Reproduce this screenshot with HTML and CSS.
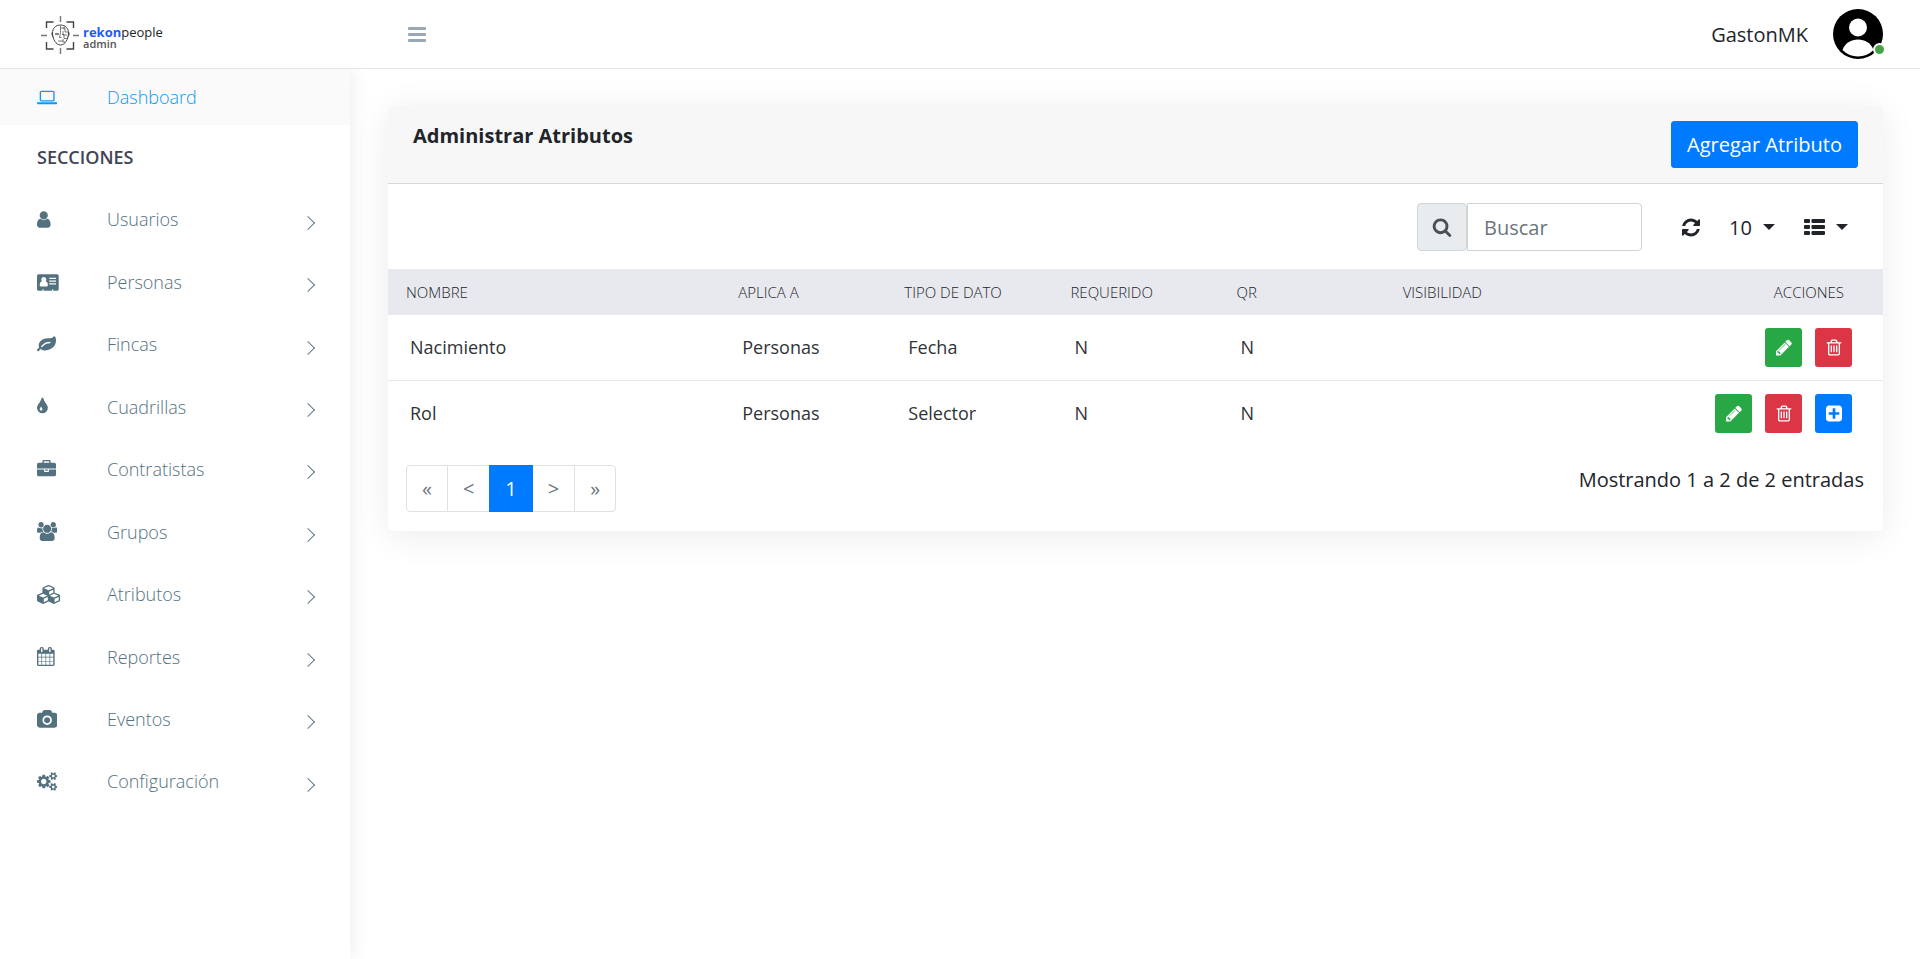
FILE: index.html
```html
<!DOCTYPE html>
<html lang="es">
<head>
<meta charset="utf-8">
<title>Administrar Atributos</title>
<link rel="stylesheet" href="styles.css">
</head>
<body>
<svg class="sprite" aria-hidden="true">
  <symbol id="i-pencil" viewBox="128 0 1536 1792"><path d="M491 1536l91-91-235-235-91 91v107h128v128h107zm523-928q0-22-22-22-10 0-17 7l-542 542q-7 7-7 17 0 22 22 22 10 0 17-7l542-542q7-7 7-17zm-54-192l416 416-832 832h-416v-416zm683 96q0 53-37 90l-166 166-416-416 166-165q36-38 90-38 53 0 91 38l235 234q37 39 37 91z"/></symbol>
  <symbol id="i-trash" viewBox="128 0 1536 1792"><path d="M704 736v576q0 14-9 23t-23 9h-64q-14 0-23-9t-9-23v-576q0-14 9-23t23-9h64q14 0 23 9t9 23zm256 0v576q0 14-9 23t-23 9h-64q-14 0-23-9t-9-23v-576q0-14 9-23t23-9h64q14 0 23 9t9 23zm256 0v576q0 14-9 23t-23 9h-64q-14 0-23-9t-9-23v-576q0-14 9-23t23-9h64q14 0 23 9t9 23zm128 724v-948h-896v948q0 22 7 40.5t14.5 27 10.5 8.5h832q3 0 10.5-8.5t14.5-27 7-40.5zm-672-1076h448l-48-117q-7-9-17-11h-317q-10 2-17 11zm928 32v64q0 14-9 23t-23 9h-96v948q0 83-47 143.5t-113 60.5h-832q-66 0-113-58.5t-47-141.5v-952h-96q-14 0-23-9t-9-23v-64q0-14 9-23t23-9h309l70-167q15-37 54-63t79-26h320q40 0 79 26t54 63l70 167h309q14 0 23 9t9 23z"/></symbol>
  <symbol id="i-plus" viewBox="128 0 1536 1792"><path d="M1408 960v-128q0-26-19-45t-45-19h-320v-320q0-26-19-45t-45-19h-128q-26 0-45 19t-19 45v320h-320q-26 0-45 19t-19 45v128q0 26 19 45t45 19h320v320q0 26 19 45t45 19h128q26 0 45-19t19-45v-320h320q26 0 45-19t19-45zm256-544v960q0 119-84.5 203.5t-203.5 84.5h-960q-119 0-203.5-84.5t-84.5-203.5v-960q0-119 84.5-203.5t203.5-84.5h960q119 0 203.5 84.5t84.5 203.5z"/></symbol>
  <symbol id="i-caret" viewBox="0 0 12 6"><path d="M0 0h12L6 6z"/></symbol>
</svg>

<header class="topbar">
  <a class="brand" href="#" aria-label="rekonpeople admin">
    <svg class="brand-mark" viewBox="0 0 38 38" fill="none" stroke="#444">
      <path stroke-width="1.4" d="M5.5 12V6h7M25.500 6h7v6M32.500 26v7h-7M12.500 33h-7v-7"/>
      <path stroke="#777" stroke-width="1.400" d="M19.500 0v6M19.500 32v6M0 19.500h6M32 19.500h6"/>
      <path stroke-width="1" d="M19.500 9c-5 0-8 3.500-8 8 0 6 3.500 12 8 12s8-6 8-12c0-4.500-3-8-8-8zM11.500 16c-1.500 1 0 5 1 5M27.500 16c1.500 1 0 5-1 5"/>
      <path stroke-width=".7" d="M14 18q2-1.500 4 0-2 1.500-4 0M19.500 9.500v7l-1 5h2M17 25h5M20 12h4v4h3M22 15v4h4M21 18.500h2v4h3M22 23v3h2M23 10.500v3"/>
    </svg>
    <span class="brand-text"><span><b>rekon</b>people</span><span class="brand-sub">admin</span></span>
  </a>
  <button class="menu-toggle" type="button" aria-label="Menú">
    <svg viewBox="0 0 18 15"><path d="M1 0h16q1 0 1 1v1q0 1-1 1H1Q0 3 0 2V1q0-1 1-1zM1 6h16q1 0 1 1v1q0 1-1 1H1Q0 9 0 8V7q0-1 1-1zM1 12h16q1 0 1 1v1q0 1-1 1H1q-1 0-1-1v-1q0-1 1-1z"/></svg>
  </button>
  <a class="user" href="#">
    <span>GastonMK</span>
    <span class="avatar">
      <svg viewBox="0 0 50 50"><circle cx="25" cy="25" r="25"/><circle cx="25" cy="18.500" r="9" fill="#fff"/><path fill="#fff" d="M9.500 41C12 34 18 30.500 25 30.500S38 34 40.500 41Q34 47.500 25 47.500T9.500 41z"/></svg>
      <i class="status"></i>
    </span>
  </a>
</header>

<div class="layout">
  <nav class="sidebar">
    <a class="nav-link active" href="#">
      <span class="nav-icon"><svg viewBox="0 0 1920 1792"><path d="M416 1280q-66 0-113-47t-47-113v-704q0-66 47-113t113-47h1088q66 0 113 47t47 113v704q0 66-47 113t-113 47h-1088zm-32-864v704q0 13 9.500 22.500t22.500 9.500h1088q13 0 22.500-9.500t9.500-22.500v-704q0-13-9.500-22.500t-22.500-9.500h-1088q-13 0-22.500 9.500t-9.500 22.500zm1376 928h160v96q0 40-47 68t-113 28h-1600q-66 0-113-28t-47-68v-96h1760z"/></svg></span>Dashboard</a>
    <h2 class="nav-title">SECCIONES</h2>
    <ul class="nav-list">
      <li><a class="nav-link" href="#"><span class="nav-icon"><svg viewBox="256 0 1280 1792"><path d="M1536 1399q0 109-62.500 187t-150.500 78h-854q-88 0-150.500-78t-62.500-187q0-85 8.500-160.500t31.500-152 58.500-131 94-89 134.500-34.500q131 128 313 128t313-128q76 0 134.500 34.500t94 89 58.500 131 31.500 152 8.500 160.500zm-256-887q0 159-112.500 271.500t-271.500 112.500-271.500-112.500-112.500-271.500 112.500-271.500 271.500-112.500 271.500 112.500 112.500 271.500z"/></svg></span>Usuarios<i class="chevron"></i></a></li>
      <li><a class="nav-link" href="#"><span class="nav-icon"><svg viewBox="0 0 2048 1792"><path fill-rule="evenodd" d="M160 128h1728q66 0 113 47t47 113v1216q0 66-47 113t-113 47h-352v-96h-128v96H640v-96H512v96H160q-66 0-113-47T0 1504V288q0-66 47-113t113-47zM640 384q-106 0-170 70t-64 170q0 110 60 180-210 20-210 350 0 126 120 126h528q120 0 120-126 0-330-210-350 60-70 60-180 0-100-64-170t-170-70zM1152 448v128h640V448zm0 256v128h640V704zm0 256v128h640V960z"/></svg></span>Personas<i class="chevron"></i></a></li>
      <li><a class="nav-link" href="#"><span class="nav-icon"><svg viewBox="0 0 1792 1792"><path d="M1280 704q0-26-19-45t-45-19q-172 0-318 49.500t-259.500 134-235.500 219.500q-19 21-19 45 0 26 19 45t45 19q24 0 45-19 27-24 74-71t67-66q137-124 268.500-176t313.500-52q26 0 45-19t19-45zm512-198q0 95-20 193-46 224-184.500 383t-357.500 268q-214 108-438 108-148 0-286-47-15-5-88-42t-96-37q-16 0-39.500 32t-45 70-52.500 70-60 32q-43 0-63.500-17.500t-45.500-59.500q-2-4-6-11t-5.500-10-3-9.500-1.500-13.500q0-35 31-73.500t68-65.500 68-56 31-48q0-4-14-38t-16-44q-9-51-9-104 0-115 43.500-220t119-184.500 170.500-139 204-95.500q55-18 145-25.500t179.500-9 178.500-6 163.500-24 113.500-56.500l29.500-29.500 29.500-28 27-20 36.500-16 43.500-4.500q39 0 70.500 46t47.500 112 24 124 8 96z"/></svg></span>Fincas<i class="chevron"></i></a></li>
      <li><a class="nav-link" href="#"><span class="nav-icon"><svg viewBox="384 0 1024 1792"><path d="M896 1152q0-36-20-69-1-1-15.500-22.500t-25.500-38-25-44-21-50.500q-4-16-21-16t-21 16q-7 23-21 50.500t-25 44-25.500 38-15.500 22.500q-20 33-20 69 0 53 37.500 90.500t90.500 37.500 90.500-37.500 37.500-90.500zm512-128q0 212-150 362t-362 150-362-150-150-362q0-145 81-275 6-9 62.500-90.500t101-151 99.500-178 83-201.500q9-30 34-47t51-17 51.500 17 33.500 47q28 93 83 201.500t99.500 178 101 151 62.500 90.500q81 127 81 275z"/></svg></span>Cuadrillas<i class="chevron"></i></a></li>
      <li><a class="nav-link" href="#"><span class="nav-icon"><svg viewBox="0 0 1792 1792"><path d="M640 256h512v-128h-512v128zm1152 640v480q0 66-47 113t-113 47h-1472q-66 0-113-47t-47-113v-480h672v160q0 26 19 45t45 19h320q26 0 45-19t19-45v-160h672zm-768 0v128h-256v-128h256zm768-480v384h-1792v-384q0-66 47-113t113-47h352v-160q0-40 28-68t68-28h576q40 0 68 28t28 68v160h352q66 0 113 47t47 113z"/></svg></span>Contratistas<i class="chevron"></i></a></li>
      <li><a class="nav-link" href="#"><span class="nav-icon"><svg viewBox="0 0 1920 1792"><path d="M593 896q-162 5-265 128h-134q-82 0-138-40.500t-56-118.500q0-353 124-353 6 0 43.500 21t97.500 42.500 119 21.500q67 0 133-23-5 37-5 66 0 159 81 282zm1071 637q0 120-73 189.500t-194 69.500h-874q-121 0-194-69.500t-73-189.500q0-53 3.500-103.500t14-109 26.500-108.500 43-97.500 62-81 85.500-53.500 111.500-20q10 0 43 21.500t73 48 107 48 135 21.500 135-21.500 107-48 73-48 43-21.500q61 0 111.500 20t85.500 53.500 62 81 43 97.500 26.500 108.500 14 109 3.500 103.500zm-1024-1277q0 106-75 181t-181 75-181-75-75-181 75-181 181-75 181 75 75 181zm704 384q0 159-112.500 271.500t-271.500 112.500-271.500-112.500-112.500-271.500 112.500-271.500 271.500-112.500 271.500 112.500 112.500 271.500zm576 225q0 78-56 118.500t-138 40.500h-134q-103-123-265-128 81-123 81-282 0-29-5-66 66 23 133 23 59 0 119-21.500t97.500-42.500 43.500-21q124 0 124 353zm-128-609q0 106-75 181t-181 75-181-75-75-181 75-181 181-75 181 75 75 181z"/></svg></span>Grupos<i class="chevron"></i></a></li>
      <li><a class="nav-link" href="#"><span class="nav-icon"><svg viewBox="0 0 2304 1792"><path d="M640 1632l384-192v-314l-384 164v342zm-64-454l404-173-404-173-404 173zm1088 454l384-192v-314l-384 164v342zm-64-454l404-173-404-173-404 173zm-448-293l384-165v-266l-384 164v267zm-64-379l441-189-441-189-441 189zm1088 518v416q0 36-19 67t-52 47l-448 224q-25 14-57 14t-57-14l-448-224q-4-2-7-4-2 2-7 4l-448 224q-25 14-57 14t-57-14l-448-224q-33-16-52-47t-19-67v-416q0-38 21.500-70t56.500-48l434-186v-400q0-38 21.500-70t56.500-48l448-192q23-10 50-10t50 10l448 192q35 16 56.500 48t21.500 70v400l434 186q36 16 57 48t21 70z"/></svg></span>Atributos<i class="chevron"></i></a></li>
      <li><a class="nav-link" href="#"><span class="nav-icon"><svg viewBox="64 0 1664 1792"><path d="M192 1664h288v-288h-288v288zm352 0h320v-288h-320v288zm-352-352h288v-320h-288v320zm352 0h320v-320h-320v320zm-352-384h288v-288h-288v288zm736 736h320v-288h-320v288zm-384-736h320v-288h-320v288zm768 736h288v-288h-288v288zm-384-352h320v-320h-320v320zm-352-864v-288q0-13-9.500-22.500t-22.500-9.500h-64q-13 0-22.500 9.500t-9.500 22.500v288q0 13 9.500 22.500t22.500 9.500h64q13 0 22.500-9.500t9.500-22.500zm736 864h288v-320h-288v320zm-384-384h320v-288h-320v288zm384 0h288v-288h-288v288zm32-480v-288q0-13-9.500-22.500t-22.500-9.500h-64q-13 0-22.500 9.500t-9.500 22.500v288q0 13 9.500 22.500t22.500 9.500h64q13 0 22.500-9.500t9.500-22.500zm384-64v1280q0 52-38 90t-90 38h-1408q-52 0-90-38t-38-90v-1280q0-52 38-90t90-38h128v-96q0-66 47-113t113-47h64q66 0 113 47t47 113v96h384v-96q0-66 47-113t113-47h64q66 0 113 47t47 113v96h128q52 0 90 38t38 90z"/></svg></span>Reportes<i class="chevron"></i></a></li>
      <li><a class="nav-link" href="#"><span class="nav-icon"><svg viewBox="0 0 1920 1792"><path d="M960 672q119 0 203.500 84.500t84.500 203.500-84.500 203.500-203.500 84.500-203.500-84.500-84.500-203.500 84.500-203.500 203.500-84.500zm704-416q106 0 181 75t75 181v896q0 106-75 181t-181 75h-1408q-106 0-181-75t-75-181v-896q0-106 75-181t181-75h224l51-136q19-49 69.500-84.500t103.500-35.500h512q53 0 103.500 35.500t69.500 84.500l51 136h224zm-704 1152q185 0 316.500-131.500t131.500-316.500-131.500-316.500-316.500-131.500-316.500 131.500-131.500 316.500 131.500 316.500 316.500 131.500z"/></svg></span>Eventos<i class="chevron"></i></a></li>
      <li><a class="nav-link" href="#"><span class="nav-icon"><svg viewBox="0 0 1920 1792"><path d="M896 896q0-106-75-181t-181-75-181 75-75 181 75 181 181 75 181-75 75-181zm768 512q0-52-38-90t-90-38-90 38-38 90q0 53 37.500 90.500t90.500 37.500 90.500-37.500 37.500-90.500zm0-1024q0-52-38-90t-90-38-90 38-38 90q0 53 37.500 90.500t90.500 37.500 90.500-37.500 37.500-90.500zm-384 421v185q0 10-7 19.500t-16 10.500l-155 24q-11 35-32 76 34 48 90 115 7 11 7 20 0 12-7 19-23 30-82.500 89.500t-78.500 59.500q-11 0-21-7l-115-90q-37 19-77 31-11 108-23 155-7 24-30 24h-186q-11 0-20-7.500t-10-17.500l-23-153q-34-10-75-31l-118 89q-7 7-20 7-11 0-21-8-144-133-144-160 0-9 7-19 10-14 41-53t47-61q-23-44-35-82l-152-24q-10-1-17-9.500t-7-19.500v-185q0-10 7-19.500t16-10.500l155-24q11-35 32-76-34-48-90-115-7-11-7-20 0-12 7-20 22-30 82-89t79-59q11 0 21 7l115 90q34-18 77-32 11-108 23-154 7-24 30-24h186q11 0 20 7.500t10 17.500l23 153q34 10 75 31l118-89q8-7 20-7 11 0 21 8 144 133 144 160 0 8-7 19-12 16-42 54t-45 60q23 48 34 82l152 23q10 2 17 10.500t7 19.500zm640 533v140q0 16-149 31-12 27-30 52 51 113 51 138 0 4-4 7-122 71-124 71-8 0-46-47t-52-68q-20 2-30 2t-30-2q-14 21-52 68t-46 47q-2 0-124-71-4-3-4-7 0-25 51-138-18-25-30-52-149-15-149-31v-140q0-16 149-31 13-29 30-52-51-113-51-138 0-4 4-7 4-2 35-20t59-34 30-16q8 0 46 46.500t52 67.500q20-2 30-2t30 2q51-71 92-112l6-2q4 0 124 70 4 3 4 7 0 25-51 138 17 23 30 52 149 15 149 31zm0-1024v140q0 16-149 31-12 27-30 52 51 113 51 138 0 4-4 7-122 71-124 71-8 0-46-47t-52-68q-20 2-30 2t-30-2q-14 21-52 68t-46 47q-2 0-124-71-4-3-4-7 0-25 51-138-18-25-30-52-149-15-149-31v-140q0-16 149-31 13-29 30-52-51-113-51-138 0-4 4-7 4-2 35-20t59-34 30-16q8 0 46 46.500t52 67.500q20-2 30-2t30 2q51-71 92-112l6-2q4 0 124 70 4 3 4 7 0 25-51 138 17 23 30 52 149 15 149 31z"/></svg></span>Configuración<i class="chevron"></i></a></li>
    </ul>
  </nav>

  <main class="content">
    <section class="card">
      <div class="card-header">
        <h1>Administrar Atributos</h1>
        <button class="btn-primary" type="button">Agregar Atributo</button>
      </div>
      <div class="toolbar">
        <div class="search">
          <label for="search" aria-label="Buscar"><svg viewBox="0 0 1792 1792"><path d="M1216 832q0-185-131.500-316.500t-316.500-131.500-316.500 131.500-131.500 316.500 131.500 316.500 316.500 131.500 316.500-131.500 131.500-316.500zm512 832q0 52-38 90t-90 38q-54 0-90-38l-343-342q-179 124-399 124-143 0-273.500-55.500t-225-150-150-225-55.500-273.500 55.500-273.500 150-225 225-150 273.500-55.500 273.500 55.500 225 150 150 225 55.500 273.500q0 220-124 399l343 343q37 37 37 90z"/></svg></label>
          <input id="search" type="text" placeholder="Buscar">
        </div>
        <button class="tool" type="button" aria-label="Actualizar"><svg class="icon-refresh" viewBox="128 0 1536 1792"><path d="M1639 1056q0 5-1 7-64 268-268 434.500t-478 166.500q-146 0-282.500-55t-243.500-157l-129 129q-19 19-45 19t-45-19-19-45v-448q0-26 19-45t45-19h448q26 0 45 19t19 45-19 45l-137 137q71 66 161 102t187 36q134 0 250-65t186-179q11-17 53-117 8-23 30-23h192q13 0 22.500 9.500t9.500 22.500zm25-800v448q0 26-19 45t-45 19h-448q-26 0-45-19t-19-45 19-45l138-138q-148-137-349-137-134 0-250 65t-186 179q-11 17-53 117-8 23-30 23h-199q-13 0-22.500-9.500t-9.500-22.500v-7q65-268 270-434.500t480-166.500q146 0 284 55.500t245 156.500l130-129q19-19 45-19t45 19 19 45z"/></svg></button>
        <label class="tool page-size">
          <select aria-label="Filas por página"><option>10</option><option>25</option><option>50</option></select>
          <svg class="caret"><use href="#i-caret"/></svg>
        </label>
        <button class="tool" type="button" aria-label="Columnas" aria-haspopup="true">
          <svg class="icon-list" viewBox="0 0 21 16"><path d="M1 0h4q1 0 1 1v2q0 1-1 1H1Q0 4 0 3V1q0-1 1-1zM8.500 0H20q1 0 1 1v2q0 1-1 1H8.500q-1 0-1-1V1q0-1 1-1zM1 6h4q1 0 1 1v2q0 1-1 1H1Q0 10 0 9V7q0-1 1-1zM8.500 6H20q1 0 1 1v2q0 1-1 1H8.500q-1 0-1-1V7q0-1 1-1zM1 12h4q1 0 1 1v2q0 1-1 1H1q-1 0-1-1v-2q0-1 1-1zM8.500 12H20q1 0 1 1v2q0 1-1 1H8.500q-1 0-1-1v-2q0-1 1-1z"/></svg>
          <svg class="caret"><use href="#i-caret"/></svg>
        </button>
      </div>
      <table class="grid">
        <colgroup><col class="c2"><col class="c1"><col class="c1"><col class="c1"><col class="c1"><col class="c1"><col class="c2"></colgroup>
        <thead>
          <tr><th>NOMBRE</th><th>APLICA A</th><th>TIPO DE DATO</th><th>REQUERIDO</th><th>QR</th><th>VISIBILIDAD</th><th class="right">ACCIONES</th></tr>
        </thead>
        <tbody>
          <tr><td>Nacimiento</td><td>Personas</td><td>Fecha</td><td>N</td><td>N</td><td></td>
            <td><div class="actions">
              <button class="act green" type="button" aria-label="Editar"><svg><use href="#i-pencil"/></svg></button>
              <button class="act red" type="button" aria-label="Eliminar"><svg><use href="#i-trash"/></svg></button>
            </div></td></tr>
          <tr><td>Rol</td><td>Personas</td><td>Selector</td><td>N</td><td>N</td><td></td>
            <td><div class="actions">
              <button class="act green" type="button" aria-label="Editar"><svg><use href="#i-pencil"/></svg></button>
              <button class="act red" type="button" aria-label="Eliminar"><svg><use href="#i-trash"/></svg></button>
              <button class="act blue" type="button" aria-label="Agregar opción"><svg><use href="#i-plus"/></svg></button>
            </div></td></tr>
        </tbody>
      </table>
      <div class="card-footer">
        <nav class="pager" aria-label="Paginación">
          <a href="#">«</a><a href="#">&lt;</a><a class="current" href="#">1</a><a href="#">&gt;</a><a href="#">»</a>
        </nav>
        <p class="summary">Mostrando 1 a 2 de 2 entradas</p>
      </div>
    </section>
  </main>
</div>
</body>
</html>
```

FILE: styles.css
```css
* { box-sizing: border-box; }

body {
  margin: 0;
  min-height: 100vh;
  display: flex;
  flex-direction: column;
  font-family: "Open Sans", "Noto Sans", sans-serif;
  font-size: 20px;
  font-weight: 400;
  line-height: 29px;
  color: #212529;
  background: #fff;
}

a { color: inherit; text-decoration: none; }
button, input, select { font: inherit; color: inherit; }
button { cursor: pointer; }
svg { display: block; fill: currentColor; }
.sprite { display: none; }

.topbar {
  display: flex;
  align-items: center;
  height: 69px;
  padding-right: 37px;
  border-bottom: 1px solid #e4e5eb;
}
.brand {
  flex: 0 0 350px;
  display: flex;
  align-items: center;
  gap: 4px;
  padding: 2px 0 0 41px;
}
.brand-mark { width: 38px; height: 38px; fill: none; }
.brand-text {
  display: flex;
  flex-direction: column;
  font-size: 13px;
  line-height: 11px;
  padding-top: 6px;
}
.brand-text b { color: #1f5bff; font-weight: 700; }
.brand-sub { font-size: 11px; font-weight: 600; color: #555; }
.menu-toggle {
  margin-left: 50px;
  padding: 9px 8px 8px;
  border: 0;
  background: none;
  color: #98a9b5;
}
.menu-toggle svg { width: 18px; height: 15px; }
.user { margin-left: auto; display: flex; align-items: center; gap: 25px; }
.avatar { position: relative; color: #000; }
.avatar svg { width: 50px; height: 50px; }
.status {
  position: absolute;
  right: -3px;
  bottom: 3px;
  width: 13px;
  height: 13px;
  border: 2px solid #fff;
  border-radius: 50%;
  background: #46a346;
}

.layout { flex: 1; display: flex; }

.sidebar {
  flex: 0 0 350px;
  background: #fff;
  box-shadow: 1px 0 20px rgba(0, 0, 0, .08);
  clip-path: inset(0 -40px 0 0);
}
.nav-list { list-style: none; margin: 0; padding: 0; }
.nav-link {
  display: flex;
  align-items: center;
  padding: 17px 37px;
  font-size: 18px;
  font-weight: 300;
  line-height: 1.58;
  color: #54717f;
}
.nav-link.active {
  padding-block: 14px;
  color: #0d98f2;
  background: #fafafa;
}
.nav-icon { width: 70px; }
.nav-icon svg { height: 19px; width: auto; }
.chevron {
  width: 10px;
  height: 10px;
  margin: 6px 0 0 auto;
  border: solid #607d8b;
  border-width: 1px 1px 0 0;
  transform: rotate(45deg);
}
.nav-title {
  margin: 0;
  padding: 18px 37px 17px;
  font-size: 18px;
  font-weight: 600;
  line-height: 28px;
  color: #3e4555;
}

.content { flex: 1; min-width: 0; padding: 37px 37px 37px 38px; }
.card {
  border-radius: 5px;
  background: #fff;
  box-shadow: 0 5px 35px rgba(0, 0, 0, .08);
}
.card-header {
  display: flex;
  justify-content: space-between;
  align-items: flex-start;
  padding: 15px 25px;
  border-bottom: 1px solid #d6d7d9;
  border-radius: 5px 5px 0 0;
  background: #f7f7f7;
}
h1 { margin: 0; font-size: 20px; font-weight: 700; }
.btn-primary {
  padding: 8px 15px;
  border: 1px solid #007bff;
  border-radius: 3px;
  background: #007bff;
  color: #fff;
}

.toolbar {
  display: flex;
  justify-content: flex-end;
  align-items: center;
  padding: 19px 35px 18px;
  gap: 29px;
}
.search { display: flex; height: 48px; margin-right: 11px; }
.search label {
  display: flex;
  align-items: center;
  padding: 0 14px;
  border: 1px solid #ced4da;
  border-radius: 4px;
  background: #e9ecef;
  color: #495057;
}
.search label svg { width: 20px; height: 20px; }
.search input {
  width: 175px;
  padding: 0 16px;
  border: 1px solid #ced4da;
  border-radius: 0 4px 4px 0;
  background: #fff;
}
.search input::placeholder { color: #6c757d; opacity: 1; }
.tool {
  display: flex;
  align-items: center;
  gap: 11px;
  padding: 0;
  border: 0;
  background: none;
}
.page-size select {
  appearance: none;
  padding: 0;
  border: 0;
  background: none;
}
.icon-refresh { width: 18px; height: 21px; }
.icon-list { width: 21px; height: 16px; }
.caret { width: 12px; height: 6px; }

.grid {
  width: 100%;
  border-collapse: separate;
  border-spacing: 0;
  table-layout: fixed;
}
.c1 { width: 11.11%; }
.c2 { width: 22.22%; }
.grid th {
  padding: 8px 18px;
  font-size: 15px;
  font-weight: 300;
  line-height: 30px;
  text-align: left;
  background: #e8e9ee;
}
.grid th.right { text-align: right; padding-right: 39px; }
.grid td {
  padding: 13px 22px;
  font-size: 18px;
  color: #2f3437;
}
.grid td:last-child { padding-right: 31px; }
.grid tbody tr + tr td { border-top: 1px solid #e8e9ee; }
.actions { display: flex; justify-content: flex-end; gap: 13px; }
.act {
  display: flex;
  align-items: center;
  justify-content: center;
  width: 37px;
  height: 39px;
  padding: 0;
  border: 0;
  border-radius: 3px;
  color: #fff;
}
.act svg { width: 16px; height: 19px; }
.green { background: #28a745; }
.red { background: #dc3545; }
.blue { background: #007bff; }

.card-footer {
  display: flex;
  justify-content: space-between;
  align-items: flex-start;
  padding: 19px 19px 19px 18px;
}
.pager { display: flex; }
.pager a {
  padding: 8px 15px;
  border: 1px solid #dee2e6;
  color: #6c757d;
}
.pager a + a { margin-left: -1px; }
.pager a:first-child { border-radius: 4px 0 0 4px; }
.pager a:last-child { border-radius: 0 4px 4px 0; }
.pager .current {
  position: relative;
  border-color: #007bff;
  background: #007bff;
  color: #fff;
}
.summary { margin: 0; }
```
